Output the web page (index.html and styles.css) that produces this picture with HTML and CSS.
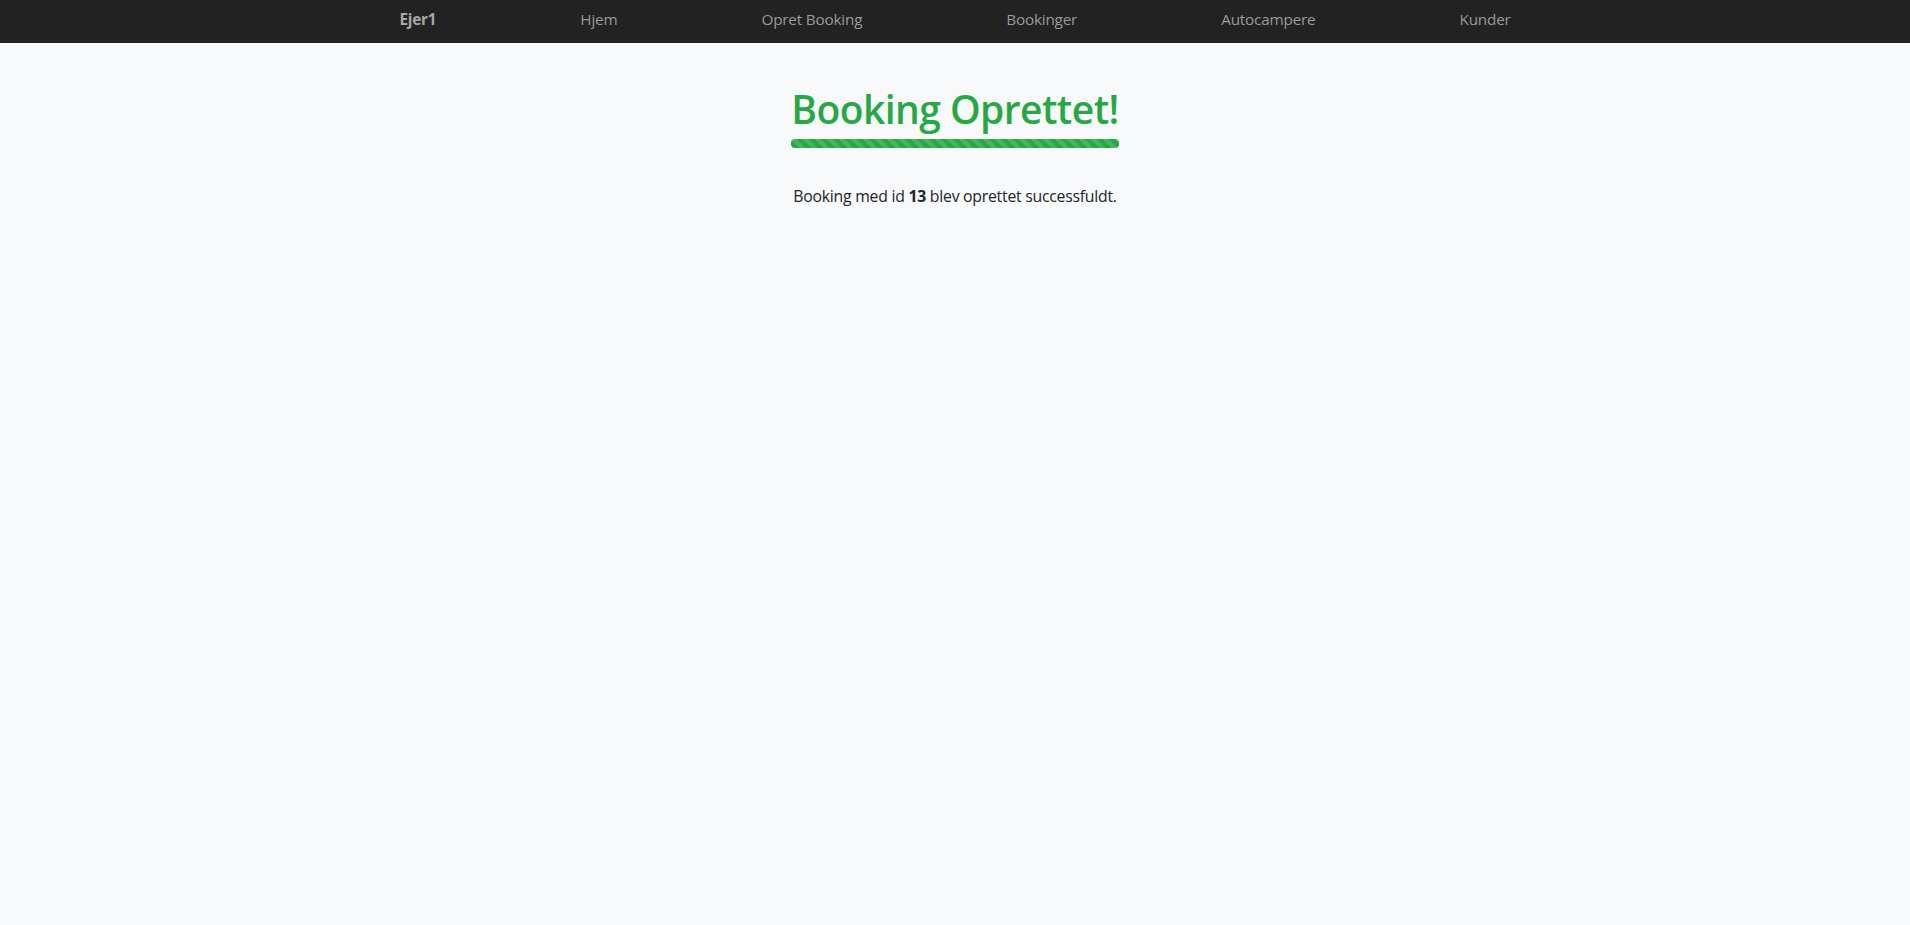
FILE: index.html
```html
<!DOCTYPE html>
<html lang="da">
<head>
<meta charset="utf-8">
<title>Booking Oprettet</title>
<link rel="stylesheet" href="styles.css">
</head>
<body>
<nav class="navbar">
  <a class="brand" href="#">Ejer1</a>
  <a class="nav-link" href="#">Hjem</a>
  <a class="nav-link" href="#">Opret Booking</a>
  <a class="nav-link" href="#">Bookinger</a>
  <a class="nav-link" href="#">Autocampere</a>
  <a class="nav-link" href="#">Kunder</a>
</nav>
<main class="content">
  <div class="title-wrap">
    <h1 class="title">Booking Oprettet!</h1>
    <div class="bar"></div>
  </div>
  <p class="message">Booking med id <strong>13</strong> blev oprettet successfuldt.</p>
</main>
</body>
</html>
```

FILE: styles.css
```css
* { box-sizing: border-box; }
html, body { margin: 0; padding: 0; }
body {
  background: #f8f9fa;
  font-family: "Open Sans", "Noto Sans", sans-serif;
  color: #212529;
  min-height: 925px;
}
.navbar {
  height: 43px;
  padding-bottom: 5px;
  background: #222222;
  display: flex;
  justify-content: center;
  align-items: center;
  gap: 144px;
}
.navbar a {
  text-decoration: none;
  font-size: 15.3px;
  color: #9a9a9a;
  letter-spacing: -0.2px;
}
.navbar .brand {
  font-weight: 700;
  color: #a8a8a8;
}
.content {
  display: flex;
  flex-direction: column;
  align-items: center;
  padding-top: 42px;
}
.title-wrap {
  display: flex;
  flex-direction: column;
  align-items: stretch;
}
.title {
  margin: 0;
  font-size: 39px;
  font-weight: 600;
  line-height: 48px;
  color: #28a745;
  letter-spacing: -0.55px;
}
.bar {
  height: 9px;
  margin-top: 6px;
  border-radius: 4px;
  background-color: #28a745;
  background-image: linear-gradient(45deg, rgba(255,255,255,.15) 25%, transparent 25%, transparent 50%, rgba(255,255,255,.15) 50%, rgba(255,255,255,.15) 75%, transparent 75%, transparent);
  background-size: 12px 12px;
}
.message {
  margin: 37px 0 0;
  font-size: 15.8px;
  line-height: 22px;
  letter-spacing: -0.25px;
}
.message strong { font-weight: 700; }
```
